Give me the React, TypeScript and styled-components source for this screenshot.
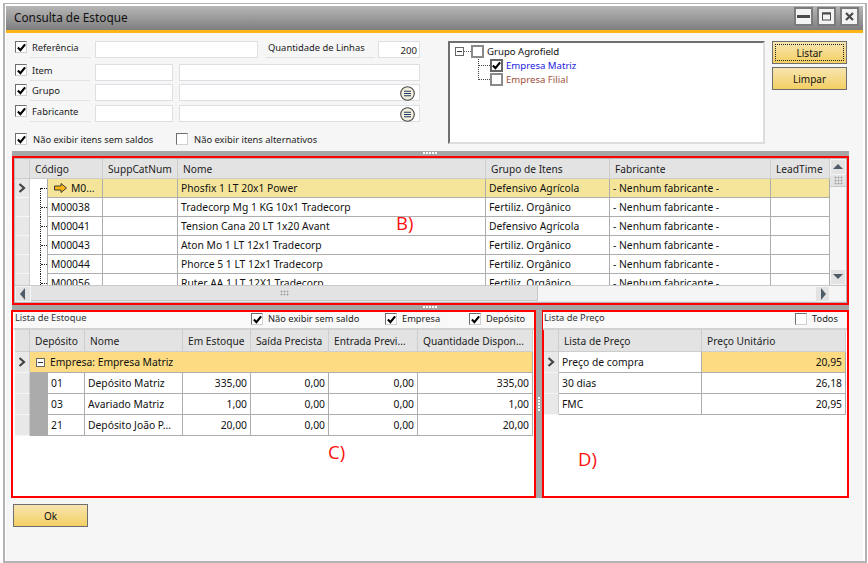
import React from "react";
import styled, { createGlobalStyle } from "styled-components";

const FONT = `"Noto Sans", "Liberation Sans", sans-serif`;

const GlobalStyle = createGlobalStyle`
  html, body {
    margin: 0;
    padding: 0;
    background: #ffffff;
  }
  body {
    font-family: ${FONT};
    font-size: 10px;
    color: #1c1c1c;
  }
  * {
    box-sizing: border-box;
  }
`;

const Window = styled.div`
  width: 864px;
  height: 560px;
  margin: 3px 0 0 3px;
  border: 2px solid #b4b4b4;
  border-top-width: 1px;
  padding: 2px 2px 0 1px;
  display: flex;
  flex-direction: column;
  background: #ffffff;
  overflow: hidden;
`;

const TitleBar = styled.div`
  height: 27px;
  flex: none;
  display: flex;
  align-items: center;
  padding: 0 4px 3px 8px;
  background: linear-gradient(#b6b6b6, #7f7f7f);
  border-bottom: 3px solid #fdb515;
`;

const Title = styled.div`
  flex: 1;
  font-size: 11.8px;
  color: #111;
`;

const WinButton = styled.div`
  width: 19px;
  height: 19px;
  margin-left: 4px;
  display: flex;
  align-items: center;
  justify-content: center;
  background: #f3f3f3;
  border: 2px solid #7b7b7b;
`;

const Content = styled.div`
  flex: 1;
  display: flex;
  flex-direction: column;
  padding-left: 6px;
  background: #f6f6f6;
`;

const Form = styled.div`
  height: 118px;
  flex: none;
  display: flex;
  padding: 8px 0 0 3px;
`;

const Filters = styled.div`
  width: 405px;
  display: flex;
  flex-direction: column;
`;

const FilterRow = styled.div<{ $top?: number }>`
  height: 17px;
  margin-top: ${(p) => p.$top ?? 0}px;
  display: flex;
  align-items: flex-start;
`;

const FilterLabel = styled.div`
  width: 60px;
  height: 17px;
  margin-left: 3px;
  padding-left: 2px;
  line-height: 14px;
  font-size: 9.4px;
  white-space: nowrap;
  border-bottom: 1px solid #dfe2e6;
`;

const QtyLabel = styled(FilterLabel)`
  width: 109px;
  margin-left: 8px;
`;

const TextBox = styled.div<{ $width?: number; $grow?: boolean; $gap?: number }>`
  position: relative;
  height: 17px;
  width: ${(p) => (p.$width ? `${p.$width}px` : "auto")};
  flex: ${(p) => (p.$grow ? 1 : "none")};
  margin-left: ${(p) => p.$gap ?? 0}px;
  background: #ffffff;
  border: 1px solid #dcdfe3;
  text-align: right;
  padding-right: 2px;
  line-height: 17px;
  font-size: 9.6px;
`;

const LookupButton = styled.svg`
  position: absolute;
  right: 4px;
  top: 1px;
  width: 15px;
  height: 15px;
`;

const OptionRow = styled.div`
  margin-top: 10px;
  display: flex;
  align-items: center;
  height: 14px;
  font-size: 9.4px;
`;

const OptionText = styled.span<{ $width?: number }>`
  margin-left: 6px;
  width: ${(p) => (p.$width ? `${p.$width}px` : "auto")};
  white-space: nowrap;
`;

const Box = styled.div<{ $tree?: boolean; $on?: boolean }>`
  position: relative;
  z-index: 1;
  width: ${(p) => (p.$tree ? 13 : 12)}px;
  height: ${(p) => (p.$tree ? 13 : 12)}px;
  flex: none;
  background: #ffffff;
  border: ${(p) => (p.$tree ? "2px solid #8a8a8a" : "1px solid #d0d0d0")};
  border-top-color: ${(p) => (p.$tree ? (p.$on ? "#666" : "#8a8a8a") : "#6e6e6e")};
  border-left-color: ${(p) => (p.$tree ? (p.$on ? "#666" : "#8a8a8a") : "#6e6e6e")};
  border-right-color: ${(p) => (p.$tree ? (p.$on ? "#666" : "#8a8a8a") : "#d0d0d0")};
  border-bottom-color: ${(p) => (p.$tree ? (p.$on ? "#666" : "#8a8a8a") : "#d0d0d0")};
  display: flex;
  align-items: center;
  justify-content: center;
`;

const TreePanel = styled.div`
  width: 317px;
  height: 103px;
  margin-left: 28px;
  padding: 1px 0 0 5px;
  background: #ffffff;
  border: 2px solid #dddddd;
  border-top-color: #6f6f6f;
  border-left-color: #6f6f6f;
  font-size: 9.6px;
`;

const TreeRoot = styled.div`
  height: 14px;
  display: flex;
  align-items: center;
`;

const Expander = styled.div`
  width: 9px;
  height: 9px;
  flex: none;
  position: relative;
  border: 1px solid #666;
  background: #fff;
  &::after {
    content: "";
    position: absolute;
    left: 1px;
    right: 1px;
    top: 3px;
    height: 1px;
    background: #333;
  }
`;

const RootDots = styled.div`
  width: 7px;
  border-top: 1px dotted #666;
`;

const TreeChild = styled.div`
  position: relative;
  height: 14px;
  margin-left: 35px;
  display: flex;
  align-items: center;
  &::before {
    content: "";
    position: absolute;
    left: -12px;
    top: -7px;
    width: 11px;
    height: 14px;
    border-left: 1px dotted #444;
    border-bottom: 1px dotted #444;
  }
`;

const TreeText = styled.span<{ $color: string }>`
  margin-left: 3px;
  color: ${(p) => p.$color};
`;

const ActionColumn = styled.div`
  margin-left: 7px;
  width: 75px;
  display: flex;
  flex-direction: column;
  gap: 3px;
`;

const YellowButton = styled.div<{ $focus?: boolean }>`
  position: relative;
  width: 75px;
  height: 23px;
  display: flex;
  align-items: center;
  justify-content: center;
  font-size: 10px;
  color: #111;
  background: linear-gradient(#f7e5b0, #f3cf63);
  border: 1px solid #6e6e6e;
  &::after {
    content: "";
    display: ${(p) => (p.$focus ? "block" : "none")};
    position: absolute;
    inset: 2px;
    border: 1px dotted #222;
  }
`;

const HSplitter = styled.div<{ $height: number }>`
  height: ${(p) => p.$height}px;
  flex: none;
  width: 837px;
  position: relative;
  background: #a6a6a6;
  &::after {
    content: "";
    position: absolute;
    left: 411px;
    top: 1px;
    width: 14px;
    height: 2px;
    background: repeating-linear-gradient(90deg, #fff 0 2px, transparent 2px 3px);
  }
`;

const VSplitter = styled.div`
  width: 6px;
  flex: none;
  position: relative;
  background: #a6a6a6;
  &::after {
    content: "";
    position: absolute;
    left: 2px;
    top: 87px;
    width: 2px;
    height: 14px;
    background: repeating-linear-gradient(180deg, #fff 0 2px, transparent 2px 3px);
  }
`;

const RedPane = styled.div<{ $width: number; $height: number }>`
  position: relative;
  width: ${(p) => p.$width}px;
  height: ${(p) => p.$height}px;
  flex: none;
  border: 2px solid #ff0000;
  display: flex;
  flex-direction: column;
`;

const GridPane = styled(RedPane)`
  background: #e9e9e9;
  padding: 1px;
  box-shadow: inset 0 0 0 1px #b5b5b5;
`;

const ListPane = styled(RedPane)<{ $inset: number }>`
  background: #ffffff;
  padding-left: ${(p) => p.$inset}px;
`;

const Marker = styled.div<{ $left: number; $top: number }>`
  position: absolute;
  left: ${(p) => p.$left}px;
  top: ${(p) => p.$top}px;
  color: #ff1010;
  font-size: 18.5px;
  line-height: 24px;
  font-family: "Open Sans", sans-serif;
  z-index: 2;
`;

const GridTop = styled.div`
  display: flex;
  height: 126px;
`;

const GridBody = styled.div`
  width: 815px;
  overflow: hidden;
  background: #ffffff;
`;

const Row = styled.div<{ $cols: string; $height: number }>`
  display: grid;
  grid-template-columns: ${(p) => p.$cols};
  height: ${(p) => p.$height}px;
  flex: none;
`;

const HeadCell = styled.div`
  background: #e3e3e3;
  border-right: 1px solid #cdcdcd;
  border-bottom: 1px solid #cdcdcd;
  padding-left: 5px;
  display: flex;
  align-items: center;
  font-size: 10.2px;
  white-space: nowrap;
  overflow: hidden;
`;

const RowHead = styled.div`
  background: #e8e8e8;
  border-right: 1px solid #cdcdcd;
  border-bottom: 1px solid #f6f6f6;
  display: flex;
  align-items: center;
  justify-content: center;
`;

const Cell = styled.div<{ $right?: boolean; $bg?: string }>`
  background: ${(p) => p.$bg ?? "#ffffff"};
  border-right: 1px solid #adadad;
  border-bottom: 1px solid #adadad;
  padding: 0 3px;
  display: flex;
  align-items: center;
  justify-content: ${(p) => (p.$right ? "flex-end" : "flex-start")};
  font-size: 10.3px;
  white-space: nowrap;
  overflow: hidden;
  color: #111;
`;

const GroupCell = styled(Cell)`
  background: #fcdb82;
  padding-left: 6px;
  gap: 5px;
`;

const IndentCell = styled.div`
  background: #ababab;
  border-bottom: 1px solid #ababab;
`;

const TreeCell = styled.div<{ $first?: boolean }>`
  position: relative;
  background: #ffffff;
  border-right: 1px solid #adadad;
  &::before {
    content: "";
    position: absolute;
    left: 10px;
    top: ${(p) => (p.$first ? "9px" : "0")};
    bottom: 0;
    border-left: 1px dotted #222;
  }
  &::after {
    content: "";
    position: absolute;
    left: 11px;
    right: 0;
    top: 9px;
    border-top: 1px dotted #222;
  }
`;

const Scrollbar = styled.div<{ $vertical?: boolean }>`
  display: flex;
  flex-direction: ${(p) => (p.$vertical ? "column" : "row")};
  background: #f5f5f5;
  ${(p) => (p.$vertical ? "width: 16px;" : "height: 16px;")}
`;

const ScrollButton = styled.div<{ $tint?: boolean }>`
  width: ${(p) => (p.$tint ? "15px" : "16px")};
  height: 16px;
  flex: none;
  display: flex;
  align-items: center;
  justify-content: center;
  background: #e3e3e3;
  border: 1px solid #f5f5f5;
`;

const HThumb = styled.div`
  width: 507px;
  flex: none;
  background: #e3e3e3;
  border-right: 1px solid #c8c8c8;
  border-bottom: 1px solid #c8c8c8;
  display: flex;
  align-items: center;
  justify-content: center;
`;

const VThumb = styled.div`
  height: 12px;
  flex: none;
  background: #e3e3e3;
  border-bottom: 1px solid #c8c8c8;
  display: flex;
  align-items: center;
  justify-content: center;
`;

const Spacer = styled.div`
  flex: 1;
`;

const Corner = styled.div`
  width: 16px;
  flex: none;
  background: #f5f5f5;
`;

const Grip = styled.div<{ $w: number; $h: number }>`
  width: ${(p) => p.$w}px;
  height: ${(p) => p.$h}px;
  background-image: radial-gradient(#a8a8a8 45%, transparent 50%);
  background-size: 3px 3px;
`;

const HRowScroll = styled(Scrollbar)`
  border-top: 1px solid #c8c8c8;
`;

const Toolbar = styled.div`
  height: 18px;
  flex: none;
  display: flex;
  border-bottom: 2px solid #d2d2d2;
  margin-left: -1px;
  background: #f9f9f9;
  font-size: 9.3px;
`;

const ToolbarTitle = styled.div`
  flex: 1;
  padding-left: 1px;
  line-height: 12px;
  color: #333;
`;

const ToolbarCheck = styled.div<{ $width: number }>`
  width: ${(p) => p.$width}px;
  display: flex;
  align-items: flex-start;
  padding-top: 1px;
  line-height: 12px;
  gap: 5px;
`;

const Lower = styled.div`
  display: flex;
  margin-left: -1px;
  height: 188px;
  flex: none;
`;

const Footer = styled.div`
  margin: 6px 0 0 1px;
`;

const Tick = () => (
  <svg width="9" height="9" viewBox="0 0 10 10">
    <path d="M1 5 L3.8 8 L9 1.5" fill="none" stroke="#000" strokeWidth="2.4" />
  </svg>
);

const Check = ({ on, tree }: { on?: boolean; tree?: boolean }) => (
  <Box $tree={tree} $on={on}>{on && <Tick />}</Box>
);

const Chevron = () => (
  <svg width="8" height="10" viewBox="0 0 8 10">
    <path d="M1.5 1 L6 5 L1.5 9" fill="none" stroke="#444" strokeWidth="2.2" />
  </svg>
);

const OrangeArrow = () => (
  <svg width="13" height="10" viewBox="0 0 13 10" style={{ margin: "0 4px 0 3px", flex: "none" }}>
    <path
      d="M0.5 3 H7 V0.5 L12.5 5 L7 9.5 V7 H0.5 Z"
      fill="#fdb515"
      stroke="#3a3a3a"
      strokeWidth="1"
    />
  </svg>
);

const Triangle = ({ dir }: { dir: "up" | "down" | "left" | "right" }) => {
  const points = {
    up: "1,8 11,8 6,3",
    down: "1,3 11,3 6,8",
    left: "8,0 8,12 3,6",
    right: "4,0 4,12 9,6",
  }[dir];
  return (
    <svg width="12" height="12" viewBox="0 0 12 12">
      <polygon points={points} fill="#4f5b66" />
    </svg>
  );
};

const Lookup = () => (
  <LookupButton viewBox="0 0 15 15">
    <circle cx="7.5" cy="7.5" r="6.8" fill="#f3eedc" stroke="#4a4a4a" strokeWidth="1.1" />
    <path d="M4 5.2 H11 M4 7.5 H11 M4 9.8 H11" stroke="#1f3a66" strokeWidth="1.1" />
  </LookupButton>
);

const ITEM_HEAD = "15px 73px 75px 308px 124px 161px 59px";
const ITEM_ROW = "15px 18px 55px 75px 308px 124px 161px 59px";
const STOCK_HEAD = "15px 55px 98px 68px 78px 89px 115px";
const STOCK_ROW = "15px 18px 37px 98px 68px 78px 89px 115px";
const STOCK_GROUP = "15px 503px";
const PRICE_COLS = "15px 143px 144px";

const items = [
  ["M00038", "Tradecorp Mg 1 KG 10x1 Tradecorp", "Fertiliz. Orgânico"],
  ["M00041", "Tension Cana 20 LT 1x20 Avant", "Defensivo Agrícola"],
  ["M00043", "Aton Mo 1 LT 12x1 Tradecorp", "Fertiliz. Orgânico"],
  ["M00044", "Phorce 5 1 LT 12x1 Tradecorp", "Fertiliz. Orgânico"],
  ["M00056", "Ruter AA 1 LT 12X1 Tradecorp", "Fertiliz. Orgânico"],
];

const stock = [
  ["01", "Depósito Matriz", "335,00", "0,00", "0,00", "335,00"],
  ["03", "Avariado Matriz", "1,00", "0,00", "0,00", "1,00"],
  ["21", "Depósito João P...", "20,00", "0,00", "0,00", "20,00"],
];

const prices = [
  ["Preço de compra", "20,95"],
  ["30 dias", "26,18"],
  ["FMC", "20,95"],
];

const SELECTED = "#f5e59b";
const GOLD = "#fcdb82";

export default function App() {
  return (
    <>
      <GlobalStyle />
      <Window>
        <TitleBar>
          <Title>Consulta de Estoque</Title>
          <WinButton>
            <svg width="13" height="13" viewBox="0 0 13 13">
              <rect x="0" y="5" width="13" height="3" fill="#4a4a4a" />
            </svg>
          </WinButton>
          <WinButton>
            <svg width="11" height="11" viewBox="0 0 11 11">
              <rect x="1.5" y="2" width="8" height="7" fill="none" stroke="#4a4a4a" />
              <rect x="1" y="1.5" width="9" height="2" fill="#4a4a4a" />
            </svg>
          </WinButton>
          <WinButton>
            <svg width="11" height="11" viewBox="0 0 11 11">
              <path d="M2 2 L9 9 M9 2 L2 9" stroke="#4a4a4a" strokeWidth="2.2" />
            </svg>
          </WinButton>
        </TitleBar>
        <Content>
          <Form>
            <Filters>
              <FilterRow>
                <Check on />
                <FilterLabel>Referência</FilterLabel>
                <TextBox $width={163} $gap={5} />
                <QtyLabel>Quantidade de Linhas</QtyLabel>
                <TextBox $width={42} $gap={3}>200</TextBox>
              </FilterRow>
              <FilterRow $top={6}>
                <Check on />
                <FilterLabel>Item</FilterLabel>
                <TextBox $width={78} $gap={5} />
                <TextBox $grow $gap={6} />
              </FilterRow>
              <FilterRow $top={3}>
                <Check on />
                <FilterLabel>Grupo</FilterLabel>
                <TextBox $width={78} $gap={5} />
                <TextBox $grow $gap={6}>
                  <Lookup />
                </TextBox>
              </FilterRow>
              <FilterRow $top={4}>
                <Check on />
                <FilterLabel>Fabricante</FilterLabel>
                <TextBox $width={78} $gap={5} />
                <TextBox $grow $gap={6}>
                  <Lookup />
                </TextBox>
              </FilterRow>
              <OptionRow>
                <Check on />
                <OptionText $width={143}>Não exibir itens sem saldos</OptionText>
                <Check />
                <OptionText>Não exibir itens alternativos</OptionText>
              </OptionRow>
            </Filters>
            <TreePanel>
              <TreeRoot>
                <Expander />
                <RootDots />
                <Check tree />
                <TreeText $color="#111">Grupo Agrofield</TreeText>
              </TreeRoot>
              <TreeChild>
                <Check tree on />
                <TreeText $color="#1a1ae0">Empresa Matriz</TreeText>
              </TreeChild>
              <TreeChild>
                <Check tree />
                <TreeText $color="#a0503c">Empresa Filial</TreeText>
              </TreeChild>
            </TreePanel>
            <ActionColumn>
              <YellowButton $focus>Listar</YellowButton>
              <YellowButton>Limpar</YellowButton>
            </ActionColumn>
          </Form>

          <HSplitter $height={5} />

          <GridPane $width={837} $height={149}>
            <Marker $left={382} $top={53}>B)</Marker>
            <GridTop>
              <GridBody>
                <Row $cols={ITEM_HEAD} $height={20}>
                  <HeadCell />
                  <HeadCell>Código</HeadCell>
                  <HeadCell>SuppCatNum</HeadCell>
                  <HeadCell>Nome</HeadCell>
                  <HeadCell>Grupo de Itens</HeadCell>
                  <HeadCell>Fabricante</HeadCell>
                  <HeadCell>LeadTime</HeadCell>
                </Row>
                <Row $cols={ITEM_ROW} $height={19}>
                  <RowHead><Chevron /></RowHead>
                  <TreeCell $first />
                  <Cell $bg={SELECTED}><OrangeArrow />M0...</Cell>
                  <Cell $bg={SELECTED} />
                  <Cell $bg={SELECTED}>Phosfix 1 LT 20x1 Power</Cell>
                  <Cell $bg={SELECTED}>Defensivo Agrícola</Cell>
                  <Cell $bg={SELECTED}>- Nenhum fabricante -</Cell>
                  <Cell $bg={SELECTED} />
                </Row>
                {items.map(([code, name, group]) => (
                  <Row key={code} $cols={ITEM_ROW} $height={19}>
                    <RowHead />
                    <TreeCell />
                    <Cell>{code}</Cell>
                    <Cell />
                    <Cell>{name}</Cell>
                    <Cell>{group}</Cell>
                    <Cell>- Nenhum fabricante -</Cell>
                    <Cell />
                  </Row>
                ))}
              </GridBody>
              <Scrollbar $vertical>
                <ScrollButton><Triangle dir="up" /></ScrollButton>
                <VThumb><Grip $w={9} $h={9} /></VThumb>
                <Spacer />
                <ScrollButton><Triangle dir="down" /></ScrollButton>
              </Scrollbar>
            </GridTop>
            <HRowScroll>
              <ScrollButton><Triangle dir="left" /></ScrollButton>
              <HThumb><Grip $w={9} $h={6} /></HThumb>
              <Spacer />
              <ScrollButton $tint><Triangle dir="right" /></ScrollButton>
              <Corner />
            </HRowScroll>
          </GridPane>

          <HSplitter $height={5} />

          <Lower>
            <ListPane $width={525} $height={188} $inset={2}>
              <Marker $left={315} $top={128}>C)</Marker>
              <Toolbar>
                <ToolbarTitle>Lista de Estoque</ToolbarTitle>
                <ToolbarCheck $width={134}><Check on />Não exibir sem saldo</ToolbarCheck>
                <ToolbarCheck $width={84}><Check on />Empresa</ToolbarCheck>
                <ToolbarCheck $width={65}><Check on />Depósito</ToolbarCheck>
              </Toolbar>
              <Row $cols={STOCK_HEAD} $height={22}>
                <HeadCell />
                <HeadCell>Depósito</HeadCell>
                <HeadCell>Nome</HeadCell>
                <HeadCell>Em Estoque</HeadCell>
                <HeadCell>Saída Precista</HeadCell>
                <HeadCell>Entrada Previ...</HeadCell>
                <HeadCell>Quantidade Dispon...</HeadCell>
              </Row>
              <Row $cols={STOCK_GROUP} $height={21}>
                <RowHead><Chevron /></RowHead>
                <GroupCell>
                  <Expander />
                  Empresa: Empresa Matriz
                </GroupCell>
              </Row>
              {stock.map(([code, name, inStock, out, incoming, available]) => (
                <Row key={code} $cols={STOCK_ROW} $height={21}>
                  <RowHead />
                  <IndentCell />
                  <Cell>{code}</Cell>
                  <Cell>{name}</Cell>
                  <Cell $right>{inStock}</Cell>
                  <Cell $right>{out}</Cell>
                  <Cell $right>{incoming}</Cell>
                  <Cell $right>{available}</Cell>
                </Row>
              ))}
            </ListPane>
            <VSplitter />
            <ListPane $width={307} $height={188} $inset={0}>
              <Marker $left={34} $top={135}>D)</Marker>
              <Toolbar>
                <ToolbarTitle>Lista de Preço</ToolbarTitle>
                <ToolbarCheck $width={52}><Check />Todos</ToolbarCheck>
              </Toolbar>
              <Row $cols={PRICE_COLS} $height={22}>
                <HeadCell />
                <HeadCell>Lista de Preço</HeadCell>
                <HeadCell>Preço Unitário</HeadCell>
              </Row>
              {prices.map(([name, value], index) => (
                <Row key={name} $cols={PRICE_COLS} $height={21}>
                  <RowHead>{index === 0 && <Chevron />}</RowHead>
                  <Cell>{name}</Cell>
                  <Cell $right $bg={index === 0 ? GOLD : undefined}>{value}</Cell>
                </Row>
              ))}
            </ListPane>
          </Lower>

          <Footer>
            <YellowButton>Ok</YellowButton>
          </Footer>
        </Content>
      </Window>
    </>
  );
}
